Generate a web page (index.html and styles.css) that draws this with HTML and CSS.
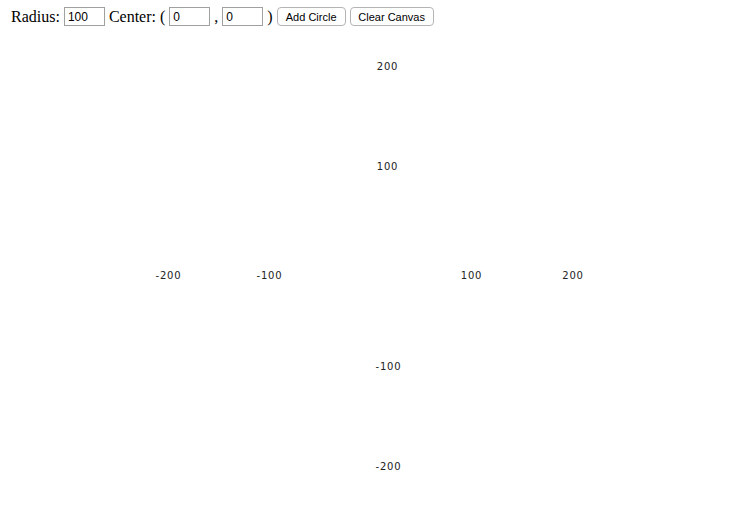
FILE: index.html
```html
<!DOCTYPE html>
<html>
<head>
<meta charset="utf-8">
<link rel="stylesheet" href="styles.css">
</head>
<body>
<div class="toolbar">Radius: <input class="num" type="text" value="100"> Center: ( <input class="num" type="text" value="0"> , <input class="num" type="text" value="0"> ) <button class="btn btn-add">Add Circle</button> <button class="btn btn-clear">Clear Canvas</button></div>
<svg class="plane" width="737" height="482" viewBox="0 26 737 482" xmlns="http://www.w3.org/2000/svg">
  <g class="labels">
    <text x="168.5" y="279">-200</text>
    <text x="269.5" y="279">-100</text>
    <text x="471.5" y="279">100</text>
    <text x="573" y="279">200</text>
    <text x="387.5" y="69.5">200</text>
    <text x="387.5" y="169.5">100</text>
    <text x="388.5" y="369.5">-100</text>
    <text x="388.5" y="469.5">-200</text>
  </g>
</svg>
</body>
</html>
```

FILE: styles.css
```css
html, body {
  margin: 0;
  padding: 0;
  background: #fff;
}
body {
  width: 737px;
  height: 508px;
  overflow: hidden;
}
.toolbar {
  padding: 7px 0 0 11px;
  height: 19px;
  font-family: "Liberation Serif", serif;
  font-size: 16px;
  line-height: 19px;
  color: #000;
  white-space: nowrap;
}
.num {
  box-sizing: border-box;
  width: 41px;
  height: 19px;
  vertical-align: top;
  margin: 0;
  padding: 0 3px;
  border: 1px solid #a0a0a0;
  font-family: "Liberation Sans", Arial, sans-serif;
  font-size: 12px;
  color: #000;
  background: #fff;
}
.btn {
  box-sizing: border-box;
  height: 19px;
  vertical-align: top;
  margin: 0;
  padding: 0;
  border: 1px solid #b4b4b4;
  border-radius: 4px;
  background: #fff;
  font-family: "Liberation Sans", Arial, sans-serif;
  font-size: 11px;
  color: #000;
}
.btn-add {
  width: 69px;
}
.btn-clear {
  width: 84px;
}
.plane {
  display: block;
}
.labels text {
  font-family: "DejaVu Sans", sans-serif;
  font-size: 10px;
  letter-spacing: 0.8px;
  fill: #222;
  text-anchor: middle;
}
```
